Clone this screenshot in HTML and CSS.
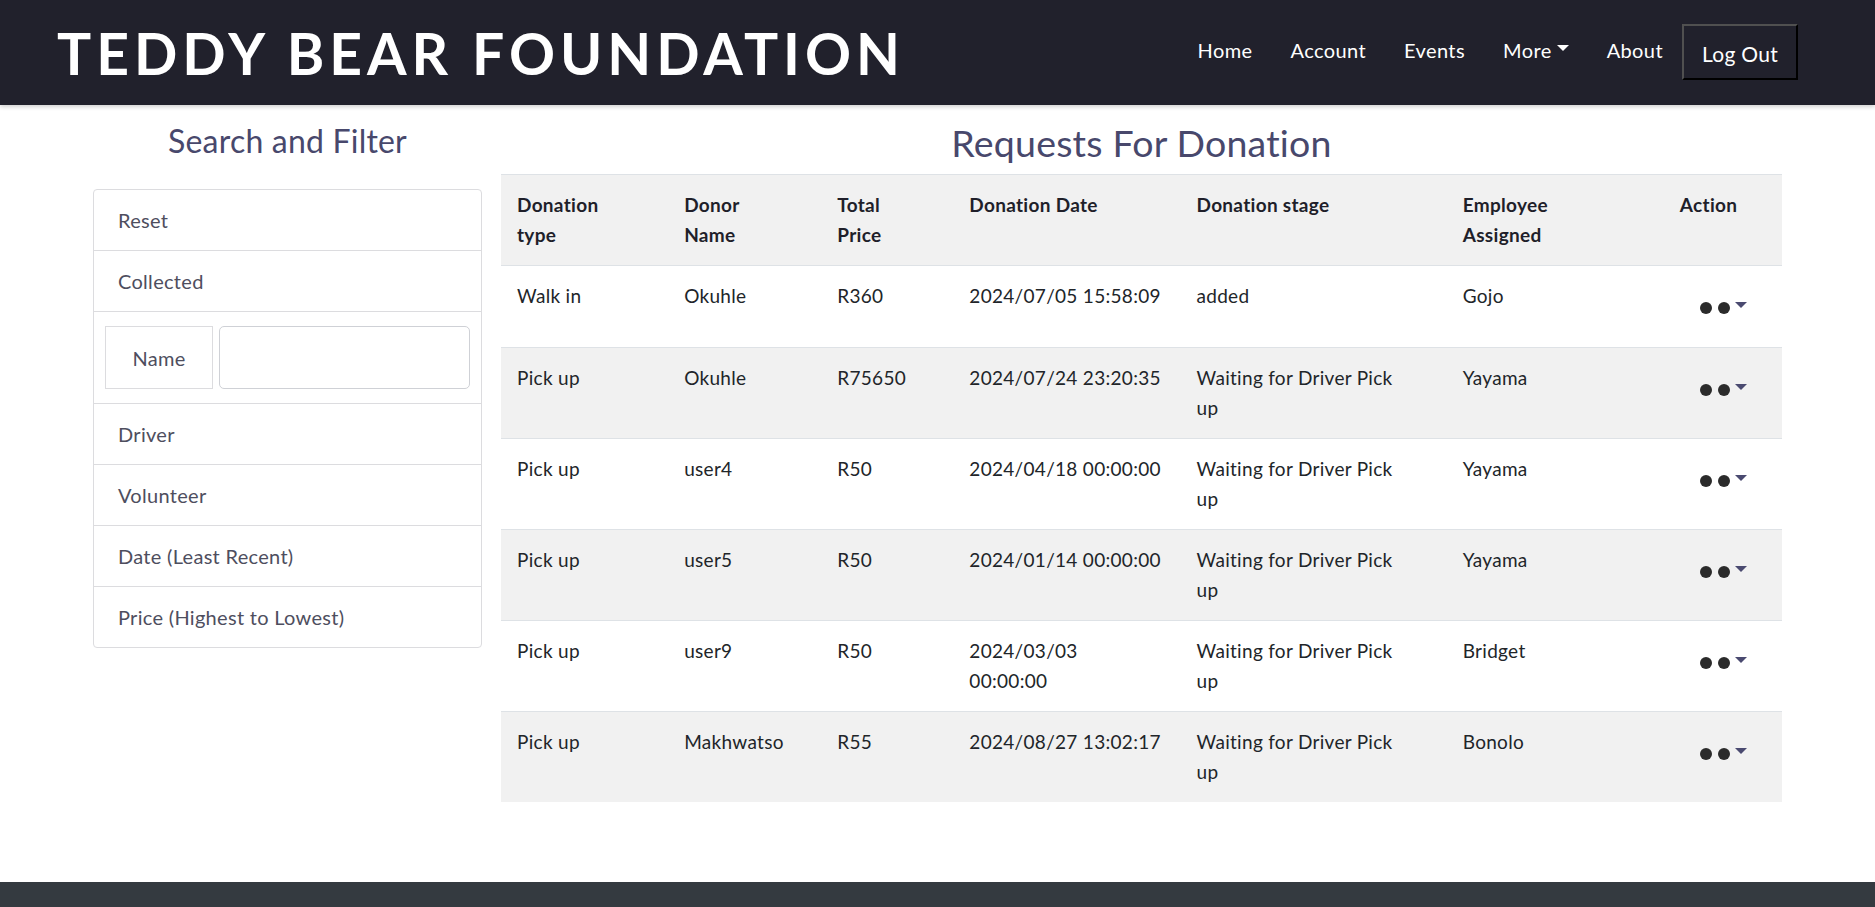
FILE: index.html
```html
<!DOCTYPE html>
<html lang="en">
<head>
<meta charset="utf-8">
<title>Teddy Bear Foundation - Requests For Donation</title>
<link rel="stylesheet" href="styles.css">
</head>
<body>
<header class="navbar">
  <a class="brand" href="#">TEDDY BEAR FOUNDATION</a>
  <nav class="nav">
    <a class="nav-link" href="#">Home</a>
    <a class="nav-link" href="#">Account</a>
    <a class="nav-link" href="#">Events</a>
    <a class="nav-link dropdown" href="#">More<span class="caret"></span></a>
    <a class="nav-link" href="#">About</a>
    <button class="logout">Log Out</button>
  </nav>
</header>

<main class="content">
  <aside class="sidebar">
    <h2 class="side-title">Search and Filter</h2>
    <ul class="list-group">
      <li class="list-item">Reset</li>
      <li class="list-item">Collected</li>
      <li class="list-item input-row">
        <div class="input-group">
          <span class="input-label">Name</span>
          <input class="input-field" type="text">
        </div>
      </li>
      <li class="list-item">Driver</li>
      <li class="list-item">Volunteer</li>
      <li class="list-item">Date (Least Recent)</li>
      <li class="list-item">Price (Highest to Lowest)</li>
    </ul>
  </aside>

  <section class="main-col">
    <h1 class="main-title">Requests For Donation</h1>
    <table class="table">
      <colgroup>
        <col class="c1"><col class="c2"><col class="c3"><col class="c4"><col class="c5"><col class="c6"><col class="c7">
      </colgroup>
      <thead>
        <tr>
          <th>Donation<br>type</th>
          <th>Donor<br>Name</th>
          <th>Total<br>Price</th>
          <th>Donation Date</th>
          <th>Donation stage</th>
          <th>Employee<br>Assigned</th>
          <th>Action</th>
        </tr>
      </thead>
      <tbody>
        <tr>
          <td>Walk in</td><td>Okuhle</td><td>R360</td><td>2024/07/05 15:58:09</td><td>added</td><td>Gojo</td>
          <td><button class="action"><span class="dot"></span><span class="dot"></span><span class="action-caret"></span></button></td>
        </tr>
        <tr class="alt">
          <td>Pick up</td><td>Okuhle</td><td>R75650</td><td>2024/07/24 23:20:35</td><td>Waiting for Driver Pick<br>up</td><td>Yayama</td>
          <td><button class="action"><span class="dot"></span><span class="dot"></span><span class="action-caret"></span></button></td>
        </tr>
        <tr>
          <td>Pick up</td><td>user4</td><td>R50</td><td>2024/04/18 00:00:00</td><td>Waiting for Driver Pick<br>up</td><td>Yayama</td>
          <td><button class="action"><span class="dot"></span><span class="dot"></span><span class="action-caret"></span></button></td>
        </tr>
        <tr class="alt">
          <td>Pick up</td><td>user5</td><td>R50</td><td>2024/01/14 00:00:00</td><td>Waiting for Driver Pick<br>up</td><td>Yayama</td>
          <td><button class="action"><span class="dot"></span><span class="dot"></span><span class="action-caret"></span></button></td>
        </tr>
        <tr>
          <td>Pick up</td><td>user9</td><td>R50</td><td>2024/03/03<br>00:00:00</td><td>Waiting for Driver Pick<br>up</td><td>Bridget</td>
          <td><button class="action"><span class="dot"></span><span class="dot"></span><span class="action-caret"></span></button></td>
        </tr>
        <tr class="alt">
          <td>Pick up</td><td>Makhwatso</td><td>R55</td><td>2024/08/27 13:02:17</td><td>Waiting for Driver Pick<br>up</td><td>Bonolo</td>
          <td><button class="action"><span class="dot"></span><span class="dot"></span><span class="action-caret"></span></button></td>
        </tr>
      </tbody>
    </table>
  </section>
</main>

<footer class="footer"></footer>
</body>
</html>
```

FILE: styles.css
```css
* { box-sizing: border-box; }

html, body {
  margin: 0;
  padding: 0;
}

body {
  font-family: "Lato", "Noto Sans", sans-serif;
  color: #212529;
  background: #ffffff;
  overflow: hidden;
}

/* ---------- Navbar ---------- */
.navbar {
  height: 105px;
  background: #21212c;
  display: flex;
  align-items: center;
  justify-content: space-between;
  padding: 0 77px 0 57px;
  box-shadow: 0 2px 4px rgba(0, 0, 0, 0.18);
  position: relative;
  z-index: 2;
}

.brand {
  color: #ffffff;
  text-decoration: none;
  font-family: "Lato", sans-serif;
  font-weight: 700;
  font-size: 57px;
  letter-spacing: 5px;
  line-height: 1;
  margin-top: 2px;
}

.nav {
  display: flex;
  align-items: center;
  margin-top: -5px;
}

.nav-link {
  color: #ffffff;
  text-decoration: none;
  font-size: 20px;
  letter-spacing: 0.4px;
  padding: 0 19px;
  display: flex;
  align-items: center;
}

.caret {
  display: inline-block;
  width: 0;
  height: 0;
  margin-left: 5px;
  border-top: 6px solid #ffffff;
  border-left: 6px solid transparent;
  border-right: 6px solid transparent;
  margin-bottom: 4px;
}

.logout {
  width: 116px;
  height: 56px;
  margin-left: 0;
  margin-top: 4px;
  background: #21212c;
  color: #ffffff;
  font-family: "Lato", sans-serif;
  font-size: 21px;
  letter-spacing: 0.3px;
  border-style: solid;
  border-width: 2px;
  border-color: #505050 #000000 #000000 #505050;
  padding: 3px 0 0;
}

/* ---------- Content ---------- */
.content {
  display: flex;
  gap: 19px;
  padding: 14px 93px 80px;
}

.sidebar {
  width: 389px;
  flex: none;
}

.side-title {
  margin: 2px 0 28px;
  text-align: center;
  font-weight: 400;
  font-size: 32px;
  letter-spacing: 0.2px;
  line-height: 40px;
  color: #48486c;
}

.list-group {
  list-style: none;
  margin: 0;
  padding: 0;
  border: 1px solid #dcdcdf;
  border-radius: 4px;
}

.list-item {
  padding: 16px 24px;
  font-size: 20px;
  letter-spacing: 0.3px;
  line-height: 28px;
  color: #4e4e5e;
  border-top: 1px solid #dcdcdf;
}

.list-item:first-child {
  border-top: none;
}

.input-row {
  padding: 14px 11px;
}

.input-group {
  display: flex;
  gap: 6px;
  height: 63px;
}

.input-label {
  width: 108px;
  flex: none;
  display: flex;
  align-items: center;
  justify-content: center;
  border: 1px solid #dcdcdf;
  color: #4e4e5e;
}

.input-field {
  flex: 1;
  min-width: 0;
  border: 1px solid #cfd1d6;
  border-radius: 5px;
  background: #ffffff;
}

.main-col {
  flex: 1;
  min-width: 0;
}

.main-title {
  margin: 0 0 7px;
  text-align: center;
  font-weight: 400;
  font-size: 37.5px;
  letter-spacing: 0.2px;
  line-height: 48px;
  color: #48486c;
}

/* ---------- Table ---------- */
.table {
  width: 100%;
  border-collapse: collapse;
  table-layout: fixed;
  font-size: 19px;
  letter-spacing: 0.3px;
  line-height: 30px;
}

.c1 { width: 167px; }
.c2 { width: 153px; }
.c3 { width: 132px; }
.c4 { width: 227px; }
.c5 { width: 266px; }
.c6 { width: 217px; }
.c7 { width: 118px; }

.table th,
.table td {
  text-align: left;
  vertical-align: top;
  white-space: nowrap;
  padding: 15px 16px;
  border-top: 1px solid #dee2e6;
}

.table thead th {
  font-weight: 700;
  background: #f1f1f1;
  color: #1f1f2a;
}

.table tr.alt td {
  background: #f1f1f1;
}

.action {
  display: inline-flex;
  align-items: flex-start;
  gap: 6px;
  height: 51px;
  padding: 21px 0 0 20px;
  margin: 0;
  border: none;
  background: transparent;
}

.dot {
  width: 12px;
  height: 12px;
  border-radius: 50%;
  background: #2b2b2b;
}

.action-caret {
  width: 0;
  height: 0;
  margin-left: -1px;
  border-top: 6px solid #4a4a70;
  border-left: 6px solid transparent;
  border-right: 6px solid transparent;
}

/* ---------- Footer ---------- */
.footer {
  height: 60px;
  background: #343a40;
}
```
